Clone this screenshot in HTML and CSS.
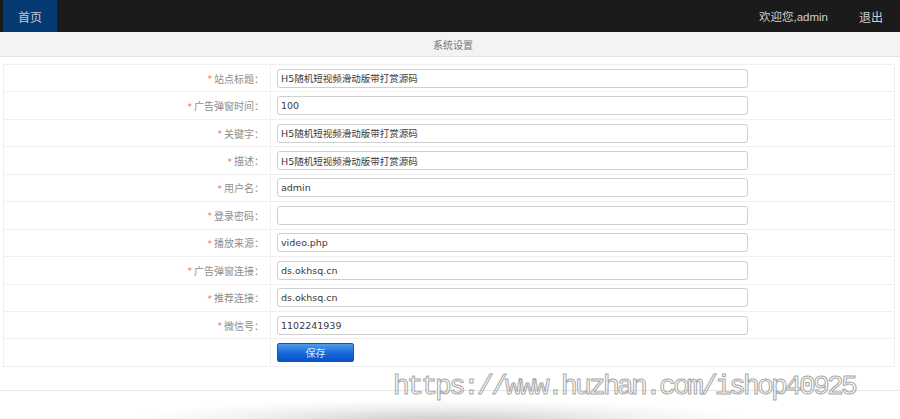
FILE: index.html
```html
<!DOCTYPE html>
<html lang="zh-CN">
<head>
<meta charset="utf-8">
<title>系统设置</title>
<link rel="stylesheet" href="styles.css">
</head>
<body>
<header class="topbar">
  <a class="home" href="#">首页</a>
  <div class="user">
    <span class="welcome">欢迎您,admin</span>
    <a class="logout" href="#">退出</a>
  </div>
</header>
<div class="subbar">系统设置</div>
<form class="settings">
  <div class="row"><label class="lbl"><i class="req">*</i>站点标题：</label><div class="field"><input class="inp" value="H5随机短视频滑动版带打赏源码"></div></div>
  <div class="row"><label class="lbl"><i class="req">*</i>广告弹窗时间：</label><div class="field"><input class="inp" value="100"></div></div>
  <div class="row"><label class="lbl"><i class="req">*</i>关键字：</label><div class="field"><input class="inp" value="H5随机短视频滑动版带打赏源码"></div></div>
  <div class="row"><label class="lbl"><i class="req">*</i>描述：</label><div class="field"><input class="inp" value="H5随机短视频滑动版带打赏源码"></div></div>
  <div class="row"><label class="lbl"><i class="req">*</i>用户名：</label><div class="field"><input class="inp" value="admin"></div></div>
  <div class="row"><label class="lbl"><i class="req">*</i>登录密码：</label><div class="field"><input class="inp" type="password" value=""></div></div>
  <div class="row"><label class="lbl"><i class="req">*</i>播放来源：</label><div class="field"><input class="inp" value="video.php"></div></div>
  <div class="row"><label class="lbl"><i class="req">*</i>广告弹窗连接：</label><div class="field"><input class="inp" value="ds.okhsq.cn"></div></div>
  <div class="row"><label class="lbl"><i class="req">*</i>推荐连接：</label><div class="field"><input class="inp" value="ds.okhsq.cn"></div></div>
  <div class="row"><label class="lbl"><i class="req">*</i>微信号：</label><div class="field"><input class="inp" value="1102241939"></div></div>
  <div class="row last"><div class="lbl"></div><div class="field"><button class="save" type="button">保存</button></div></div>
</form>
<div class="footline"></div>
<div class="shadowbox"></div>
<div class="watermark">https://www.huzhan.com/ishop40925</div>
</body>
</html>
```
FILE: styles.css
```css
html, body {
  margin: 0;
  padding: 0;
  overflow: hidden;
  background: #fff;
}
body {
  position: relative;
  height: 419px;
  font-family: "DejaVu Sans", "Noto Sans CJK SC", sans-serif;
}
.topbar {
  height: 32px;
  background: #1b1b1b;
  display: flex;
  align-items: stretch;
  justify-content: space-between;
}
.home {
  margin-left: 3px;
  width: 54px;
  background: #063a72;
  color: #c3cbd8;
  font-size: 12px;
  text-decoration: none;
  display: flex;
  align-items: center;
  justify-content: center;
  font-family: "Noto Sans CJK SC", sans-serif;
}
.user {
  display: flex;
  align-items: center;
  font-size: 12px;
  color: #cfcfcf;
  font-family: "Liberation Sans", "Noto Sans CJK SC", sans-serif;
}
.welcome {
  margin-right: 31px;
  font-size: 11.5px;
}
.logout {
  color: #cfcfcf;
  text-decoration: none;
  margin-right: 17px;
}
.subbar {
  height: 24px;
  background: #f3f3f3;
  border-bottom: 1px solid #e2e2e2;
  display: flex;
  align-items: center;
  justify-content: center;
  font-size: 10px;
  color: #777;
  font-family: "Noto Sans CJK SC", sans-serif;
  padding-left: 6px;
}
.settings {
  margin: 7px 5px 0 3px;
  border: 1px solid #efefef;
  border-bottom: none;
}
.row {
  display: grid;
  grid-template-columns: 30% 1fr;
  height: 26.45px;
  border-bottom: 1px solid #efefef;
}
.lbl {
  border-right: 1px solid #efefef;
  display: flex;
  align-items: center;
  justify-content: flex-end;
  padding-right: 6px;
  font-size: 10px;
  color: #8e8e8e;
  font-family: "Noto Sans CJK JP", sans-serif;
}
.req {
  font-style: normal;
  color: #f5731f;
  font-size: 9px;
  margin-right: 2px;
  position: relative;
  top: 1px;
  font-family: "DejaVu Sans", sans-serif;
}
.field {
  display: flex;
  align-items: center;
  padding-left: 6px;
}
.inp {
  box-sizing: border-box;
  width: 471px;
  height: 19px;
  margin: 0;
  padding: 0 3px;
  border: 1px solid #cfcfcf;
  border-radius: 3px;
  font-size: 9.5px;
  color: #3a3a3a;
  background: #fff;
  font-family: "DejaVu Sans", "Noto Sans CJK SC", sans-serif;
  outline: none;
}
.save {
  width: 77px;
  height: 19px;
  margin: 0;
  padding: 0;
  border: 1px solid #0b56c4;
  border-radius: 2px;
  background: linear-gradient(#4f9bec, #1468d8 55%, #0852c6);
  color: #d9e6f8;
  font-size: 10px;
  font-family: "Noto Sans CJK SC", sans-serif;
}
.footline {
  margin-top: 23px;
  height: 1px;
  background: #e6e6e6;
}
.shadowbox {
  margin: 0 0 0 130px;
  width: 620px;
  height: 29px;
  background: radial-gradient(ellipse 50% 70% at 50% 100%, rgba(0, 0, 0, 0.2), rgba(0, 0, 0, 0.06) 60%, rgba(0, 0, 0, 0) 100%);
}
.watermark {
  position: absolute;
  left: 393px;
  top: 370px;
  font-family: "Liberation Mono", monospace;
  font-size: 28px;
  letter-spacing: -2.8px;
  color: transparent;
  -webkit-text-stroke: 1px #a8a8a8;
  white-space: nowrap;
  line-height: 34px;
}
```
